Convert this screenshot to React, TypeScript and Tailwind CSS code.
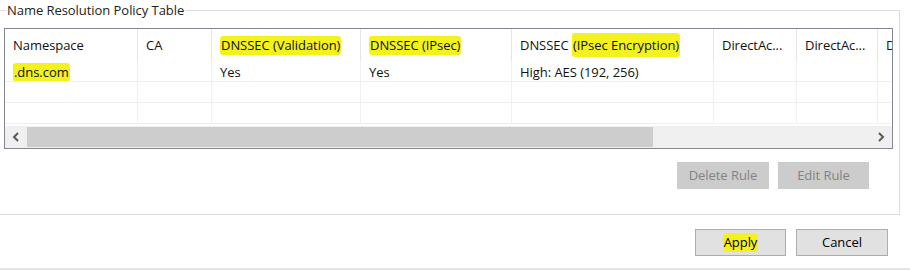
import type { ReactNode } from 'react'

const cols = [
  { w: 133, label: 'Namespace' },
  { w: 74, label: 'CA' },
  { w: 149, label: 'DNSSEC (Validation)', hl: true },
  { w: 151, label: 'DNSSEC (IPsec)', hl: true },
  { w: 202, label: 'DNSSEC (IPsec Encryption)', part: true },
  { w: 83, label: 'DirectAc...' },
  { w: 81, label: 'DirectAc...' },
  { w: 40, label: 'D' },
]

const rows: string[][] = [
  ['.dns.com', '', 'Yes', 'Yes', 'High: AES (192, 256)', '', '', ''],
  ['', '', '', '', '', '', '', ''],
  ['', '', '', '', '', '', '', ''],
]

function Mark({ children }: { children: ReactNode }) {
  return <span className="rounded-[3px] bg-[#f4f21e] px-[1px] py-[3px]">{children}</span>
}

function Chevron({ dir }: { dir: 'left' | 'right' }) {
  return (
    <svg width="8" height="10" viewBox="0 0 8 10">
      <path
        d={dir === 'left' ? 'M6 1 L2 5 L6 9' : 'M2 1 L6 5 L2 9'}
        fill="none"
        stroke="#5a5a5a"
        strokeWidth="2"
      />
    </svg>
  )
}

function WinButton({ children, disabled }: { children: ReactNode; disabled?: boolean }) {
  return (
    <div
      className={
        disabled
          ? 'flex h-[27px] items-center justify-center bg-[#cccccc] text-[#838383]'
          : 'flex h-[27px] items-center justify-center border border-[#adadad] bg-[#e1e1e1] text-black'
      }
    >
      {children}
    </div>
  )
}

export default function App() {
  return (
    <div className="relative h-[271px] w-[910px] overflow-hidden bg-white text-[13px] leading-none tracking-[-0.05px] text-[#111] [font-family:'Open_Sans','Noto_Sans',sans-serif]">
      {/* group box */}
      <div className="relative mt-[10px] h-[205px] w-[900px] border border-l-0 border-[#dcdcdc]">
        <div className="absolute -top-[7px] left-[6px] bg-white px-[1px] text-[#222]">Name Resolution Policy Table</div>

        {/* list view */}
        <div className="ml-[4px] mt-[17px] flex h-[121px] w-[889px] flex-col border border-[#828790] bg-white">
          <div className="flex h-[32px] shrink-0 overflow-hidden">
            {cols.map((c, i) => (
              <div
                key={i}
                style={{ width: c.w }}
                className="flex shrink-0 items-center overflow-hidden whitespace-nowrap border-r border-[#e5e5e5] pl-[8px] pt-[1px]"
              >
                {c.hl ? (
                  <Mark>{c.label}</Mark>
                ) : c.part ? (
                  <span>
                    DNSSEC <Mark>(IPsec Encryption)</Mark>
                  </span>
                ) : (
                  c.label
                )}
              </div>
            ))}
          </div>
          {rows.map((r, ri) => (
            <div key={ri} className="flex h-[21px] shrink-0 overflow-hidden border-b border-[#f0f0f0]">
              {r.map((cell, ci) => (
                <div
                  key={ci}
                  style={{ width: cols[ci].w }}
                  className="flex shrink-0 items-center whitespace-nowrap border-r border-[#f0f0f0] pl-[8px] pt-[2px]"
                >
                  {ri === 0 && ci === 0 ? <Mark>{cell}</Mark> : cell}
                </div>
              ))}
            </div>
          ))}
          <div className="mt-auto flex h-[22px] shrink-0 bg-[#f0f0f0]">
            <div className="flex w-[22px] items-center justify-center">
              <Chevron dir="left" />
            </div>
            <div className="my-[1px] w-[626px] bg-[#cdcdcd]" />
            <div className="flex-1" />
            <div className="flex w-[22px] items-center justify-center">
              <Chevron dir="right" />
            </div>
          </div>
        </div>

        <div className="mr-[30px] mt-[13px] flex justify-end gap-[9px]">
          <div className="w-[92px]">
            <WinButton disabled>Delete Rule</WinButton>
          </div>
          <div className="w-[91px]">
            <WinButton disabled>Edit Rule</WinButton>
          </div>
        </div>
      </div>

      {/* dialog buttons */}
      <div className="mr-[22px] mt-[14px] flex justify-end gap-[10px]">
        <div className="w-[91px]">
          <WinButton>
            <Mark>Apply</Mark>
          </WinButton>
        </div>
        <div className="w-[92px]">
          <WinButton>Cancel</WinButton>
        </div>
      </div>
      <div className="mt-[12px] h-[2px] w-full bg-[#e3e3e3]" />
    </div>
  )
}
